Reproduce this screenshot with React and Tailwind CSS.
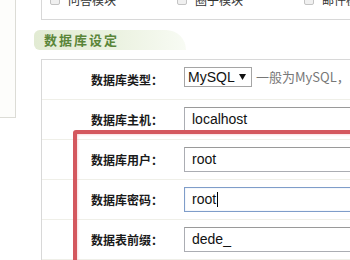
import React from "react";

const cjk = { fontFamily: '"Noto Sans CJK SC", "Liberation Sans", sans-serif' };
const latin = { fontFamily: '"Liberation Sans", "Noto Sans CJK SC", sans-serif' };

const modules = ["问答模块", "圈子模块", "邮件模块"];

function Row({ label, children, alignUp }) {
  return (
    <div className="flex h-[40px] items-center border-b border-[#efefe8]">
      <div className="w-[121px] shrink-0 text-right text-[12px] font-bold text-[#1a1a1a]" style={cjk}>
        {label}
      </div>
      <div className={"ml-[21px] flex shrink-0 items-center " + (alignUp ? "mb-[6px]" : "")}>{children}</div>
    </div>
  );
}

function TextBox({ value, focused, caret }) {
  return (
    <div
      className={
        "flex h-[25px] w-[220px] shrink-0 items-center pl-[7px] text-[14px] text-[#111] " +
        (focused
          ? "border border-[#7f9dc9] shadow-[inset_0_0_1px_#9db8dc]"
          : "border border-[#abadb3] border-t-[#9a9a9a]")
      }
      style={latin}
    >
      {value}
      {caret && <span className="ml-[1px] inline-block h-[15px] w-[1px] bg-black" />}
    </div>
  );
}

export default function App() {
  return (
    <div className="relative flex h-[260px] w-[350px] overflow-hidden bg-white">
      {/* left side panel */}
      <div className="h-[118px] w-[16px] shrink-0 border-r border-b border-[#dcdcd6] bg-[#fdfdfb]" />

      <div className="ml-[25px] w-[340px] shrink-0">
        {/* module options, scrolled off the top */}
        <div className="h-[20px] overflow-hidden border-l border-b border-[#d8d8d8]">
          <div className="-mt-[8px] flex h-[16px] items-center pl-[8px]">
            {modules.map((m) => (
              <div key={m} className="flex w-[127px] shrink-0 items-center">
                <span className="h-[10px] w-[10px] rounded-[2px] border border-[#c4c4c4] bg-[#f0f0f0]" />
                <span className="ml-[8px] text-[12px] text-[#333]" style={cjk}>
                  {m}
                </span>
              </div>
            ))}
          </div>
        </div>

        {/* section heading */}
        <div className="-ml-[7px] mt-[10px] flex h-[20px] w-[152px] items-center rounded-l-[8px] rounded-tr-[28px] bg-gradient-to-r from-[#e2ebd3] via-[#eaf1df] to-[#f8fbf4] pl-[10px]">
          <span className="text-[13px] font-bold tracking-[2px] text-[#5a8539]" style={cjk}>
            数据库设定
          </span>
        </div>

        {/* form */}
        <div className="mt-[9px] border-l border-t border-[#d8d8d8]">
          <Row label="数据库类型：" alignUp>
            <div
              className="flex h-[20px] w-[68px] shrink-0 items-center justify-between overflow-hidden whitespace-nowrap border border-[#a5a5a5] bg-white pl-[3px] pr-[5px] text-[14px] text-[#111]"
              style={latin}
            >
              <span className="leading-none">MySQL</span>
              <svg className="shrink-0" width="7" height="6" viewBox="0 0 7 6">
                <path d="M0 0H7L3.5 6Z" fill="#111" />
              </svg>
            </div>
            <span className="ml-[4px] whitespace-nowrap text-[13px] text-[#777]" style={cjk}>
              一般为MySQL，SQLite仅用于开发
            </span>
          </Row>
          <Row label="数据库主机：">
            <TextBox value="localhost" />
          </Row>
          <Row label="数据库用户：">
            <TextBox value="root" />
          </Row>
          <Row label="数据库密码：">
            <TextBox value="root" focused caret />
          </Row>
          <Row label="数据表前缀：">
            <TextBox value="dede_" />
          </Row>
        </div>
      </div>

      {/* red annotation frame */}
      <div className="pointer-events-none absolute left-[73px] top-[130px] -right-[60px] -bottom-[40px] rounded-[3px] border-[4px] border-[#d4585e] shadow-[inset_0_0_3px_#f2b7ba]" />
    </div>
  );
}
